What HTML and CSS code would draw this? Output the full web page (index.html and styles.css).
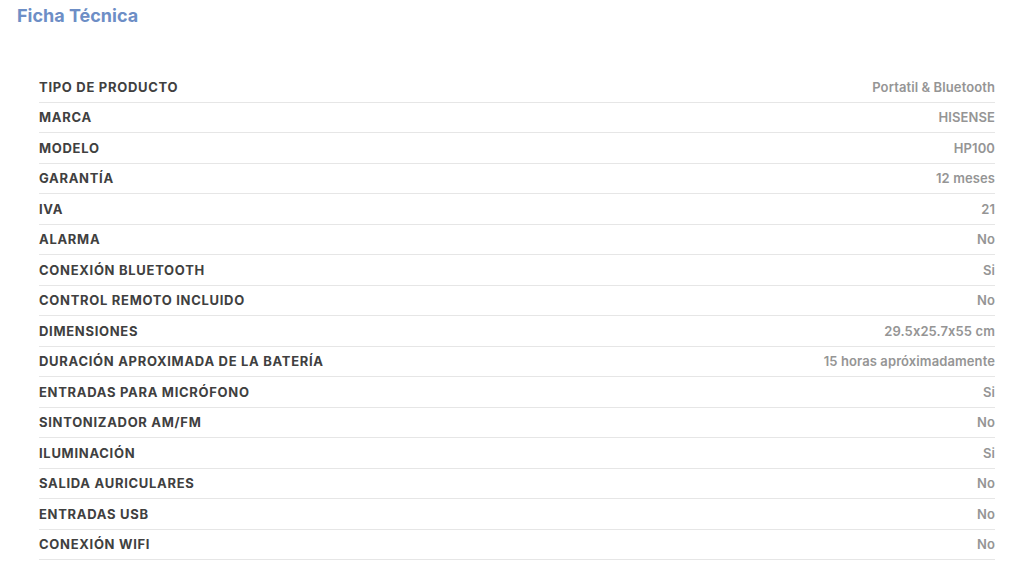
FILE: index.html
```html
<!DOCTYPE html>
<html lang="es">
<head>
<meta charset="utf-8">
<link rel="stylesheet" href="styles.css">
</head>
<body>
<div class="page">
  <h2 class="title">Ficha Técnica</h2>
  <div class="specs">
    <div class="row"><span class="label">TIPO DE PRODUCTO</span><span class="value">Portatil &amp; Bluetooth</span></div>
    <div class="row"><span class="label">MARCA</span><span class="value">HISENSE</span></div>
    <div class="row"><span class="label">MODELO</span><span class="value">HP100</span></div>
    <div class="row"><span class="label">GARANTÍA</span><span class="value">12 meses</span></div>
    <div class="row"><span class="label">IVA</span><span class="value">21</span></div>
    <div class="row"><span class="label">ALARMA</span><span class="value">No</span></div>
    <div class="row"><span class="label">CONEXIÓN BLUETOOTH</span><span class="value">Si</span></div>
    <div class="row"><span class="label">CONTROL REMOTO INCLUIDO</span><span class="value">No</span></div>
    <div class="row"><span class="label">DIMENSIONES</span><span class="value">29.5x25.7x55 cm</span></div>
    <div class="row"><span class="label">DURACIÓN APROXIMADA DE LA BATERÍA</span><span class="value">15 horas apróximadamente</span></div>
    <div class="row"><span class="label">ENTRADAS PARA MICRÓFONO</span><span class="value">Si</span></div>
    <div class="row"><span class="label">SINTONIZADOR AM/FM</span><span class="value">No</span></div>
    <div class="row"><span class="label">ILUMINACIÓN</span><span class="value">Si</span></div>
    <div class="row"><span class="label">SALIDA AURICULARES</span><span class="value">No</span></div>
    <div class="row"><span class="label">ENTRADAS USB</span><span class="value">No</span></div>
    <div class="row"><span class="label">CONEXIÓN WIFI</span><span class="value">No</span></div>
  </div>
</div>
</body>
</html>
```
FILE: styles.css
```css
html, body {
  margin: 0;
  padding: 0;
  background: #ffffff;
}
.page {
  font-family: Inter, "Liberation Sans", Arial, sans-serif;
  font-feature-settings: "calt" 0;
  padding: 5px 29px 0 17px;
}
.title {
  margin: 0;
  font-size: 18px;
  line-height: 22px;
  font-weight: 700;
  color: #6d8ec6;
  letter-spacing: 0;
}
.specs {
  margin: 45px 0 0 22px;
}
.row {
  display: flex;
  justify-content: space-between;
  align-items: center;
  height: 29.5px;
  border-bottom: 1px solid #e6e6e6;
}
.label {
  font-size: 13px;
  font-weight: 700;
  color: #404040;
  letter-spacing: 0.7px;
}
.value {
  font-size: 13px;
  font-weight: 600;
  color: #959595;
  letter-spacing: 0.1px;
}
```
